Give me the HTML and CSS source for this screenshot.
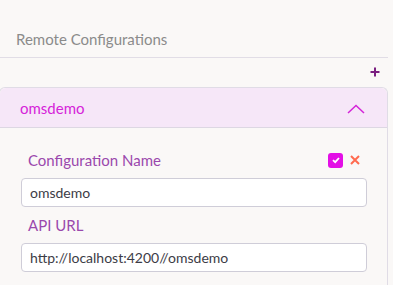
FILE: index.html
```html
<!DOCTYPE html>
<html lang="en">
<head>
<meta charset="UTF-8">
<meta name="viewport" content="width=device-width, initial-scale=1.0">
<title>Remote Configurations</title>
<link rel="stylesheet" href="styles.css">
</head>
<body>

<div class="page-title">Remote Configurations</div>

<div class="toolbar">
    <button class="add-btn" title="Add">
        <svg width="10" height="10" viewBox="0 0 10 10"><path d="M5 0.5v9M0.5 5h9" stroke="#7a1f80" stroke-width="2"/></svg>
    </button>
</div>

<!-- 配置卡片 -->
<div class="config-card">
    <div class="card-header">
        <span class="card-name">omsdemo</span>
        <svg class="chevron" width="18" height="10" viewBox="0 0 18 10"><path d="M1 9L9 1.5L17 9" fill="none" stroke="#d423d8" stroke-width="1.5"/></svg>
    </div>
    <div class="card-body">
        <div class="field-label">
            <span>Configuration Name</span>
            <span class="actions">
                <span class="check-box">
                    <svg width="10" height="10" viewBox="0 0 10 10"><path d="M2 5.2L4.2 7.2L8 3" fill="none" stroke="#fff" stroke-width="1.8"/></svg>
                </span>
                <svg class="close" width="10" height="10" viewBox="0 0 10 10"><path d="M1 1L9 9M9 1L1 9" stroke="#ff6a4f" stroke-width="2"/></svg>
            </span>
        </div>
        <input class="text-input" type="text" value="omsdemo">
        <div class="field-label">
            <span>API URL</span>
        </div>
        <input class="text-input" type="text" value="http://localhost:4200//omsdemo">
    </div>
</div>

</body>
</html>
```

FILE: styles.css
```css
body {
    font-family: Lato, "Noto Sans", sans-serif;
    margin: 0;
    padding: 0;
    background-color: #faf8f7;
    overflow: hidden;
}
.page-title {
    height: 58px;
    box-sizing: border-box;
    padding: 30px 0 0 16px;
    font-size: 15px;
    color: #8b8b8b;
    border-bottom: 1px solid #e1dde6;
    margin-right: 5px;
}
.toolbar {
    height: 29px;
    display: flex;
    justify-content: flex-end;
    align-items: center;
    padding-right: 13px;
}
.add-btn {
    background: none;
    border: none;
    padding: 0;
    width: 10px;
    height: 10px;
    display: flex;
    cursor: pointer;
    margin-top: -2px;
}
.config-card {
    margin: 0 5px 0 -1px;
    border: 1px solid #e0dce6;
    border-bottom: none;
    border-radius: 6px 6px 0 0;
}
.card-header {
    height: 39px;
    background-color: #f6e7f8;
    border-bottom: 1px solid #ddd7e3;
    border-radius: 6px 6px 0 0;
    display: flex;
    align-items: center;
    justify-content: space-between;
    padding: 0 22px 0 20px;
}
.card-name {
    font-size: 15px;
    color: #d523d9;
}
.chevron {
    margin-top: 2px;
}
.card-body {
    padding: 14px 20px 20px 21px;
}
.field-label {
    height: 36px;
    display: flex;
    align-items: center;
    justify-content: space-between;
    padding: 0 7px 0 7px;
    font-size: 15px;
    color: #9a48ad;
}
.actions {
    display: flex;
    align-items: center;
    gap: 7px;
}
.check-box {
    width: 15px;
    height: 15px;
    border-radius: 3px;
    background-color: #e30fe6;
    display: flex;
    align-items: center;
    justify-content: center;
}
.text-input {
    display: block;
    width: 100%;
    height: 29px;
    box-sizing: border-box;
    border: 1px solid #cfcdd8;
    border-radius: 4px;
    background-color: #fff;
    padding: 0 8px;
    font-family: Lato, "Noto Sans", sans-serif;
    font-size: 14px;
    color: #3c3c46;
    outline: none;
}
```
